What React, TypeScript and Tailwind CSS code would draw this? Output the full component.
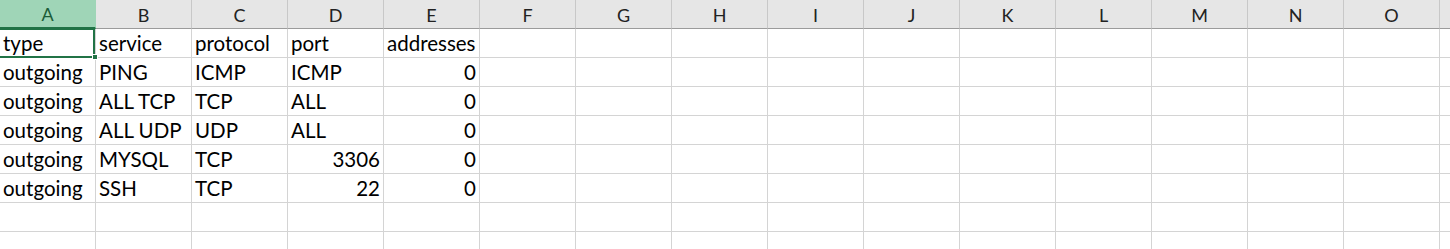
import React from 'react'

const columns = ['A', 'B', 'C', 'D', 'E', 'F', 'G', 'H', 'I', 'J', 'K', 'L', 'M', 'N', 'O', '']

type Cell = { v: string; num?: boolean }

const rows: Cell[][] = [
  [{ v: 'type' }, { v: 'service' }, { v: 'protocol' }, { v: 'port' }, { v: 'addresses' }],
  [{ v: 'outgoing' }, { v: 'PING' }, { v: 'ICMP' }, { v: 'ICMP' }, { v: '0', num: true }],
  [{ v: 'outgoing' }, { v: 'ALL TCP' }, { v: 'TCP' }, { v: 'ALL' }, { v: '0', num: true }],
  [{ v: 'outgoing' }, { v: 'ALL UDP' }, { v: 'UDP' }, { v: 'ALL' }, { v: '0', num: true }],
  [{ v: 'outgoing' }, { v: 'MYSQL' }, { v: 'TCP' }, { v: '3306', num: true }, { v: '0', num: true }],
  [{ v: 'outgoing' }, { v: 'SSH' }, { v: 'TCP' }, { v: '22', num: true }, { v: '0', num: true }],
  [],
  [],
]

export default function App() {
  return (
    <div className="w-[1450px] h-[249px] overflow-hidden bg-white font-['Lato',sans-serif] text-[20.5px] text-black">
      {/* column letters */}
      <div className="flex h-[29px]">
        {columns.map((c, i) => (
          <div
            key={i}
            className={
              i === 0
                ? 'w-[96px] shrink-0 flex items-center justify-center bg-[#9fd5b7] border-b-2 border-[#217346] border-r border-r-[#9fd5b7] text-[#1c5c38] text-[18px] pt-[1px]'
                : 'w-[96px] shrink-0 flex items-center justify-center bg-[#e6e6e6] border-b border-[#9b9b9b] border-r border-r-[#c8c8c8] text-[#222] text-[18px] pt-[2px]'
            }
          >
            {c}
          </div>
        ))}
      </div>

      {/* sheet body */}
      <div className="relative">
        {rows.map((row, r) => (
          <div key={r} className="flex h-[29px]">
            {columns.map((_, i) => {
              const cell = row[i]
              return (
                <div
                  key={i}
                  className={`w-[96px] shrink-0 border-r border-b border-[#d4d4d4] flex items-end px-[3px] pb-[1px] whitespace-nowrap leading-[25px] ${
                    cell?.num ? 'justify-end' : 'justify-start'
                  }`}
                >
                  {cell?.v}
                </div>
              )
            })}
          </div>
        ))}

        {/* active cell A1 */}
        <div className="absolute left-[-2px] top-[-1px] w-[97px] h-[30px] border-2 border-[#217346] pointer-events-none" />
        <div className="absolute left-[92px] top-[25px] w-[6px] h-[6px] bg-[#217346] border border-white pointer-events-none" />
      </div>
    </div>
  )
}
